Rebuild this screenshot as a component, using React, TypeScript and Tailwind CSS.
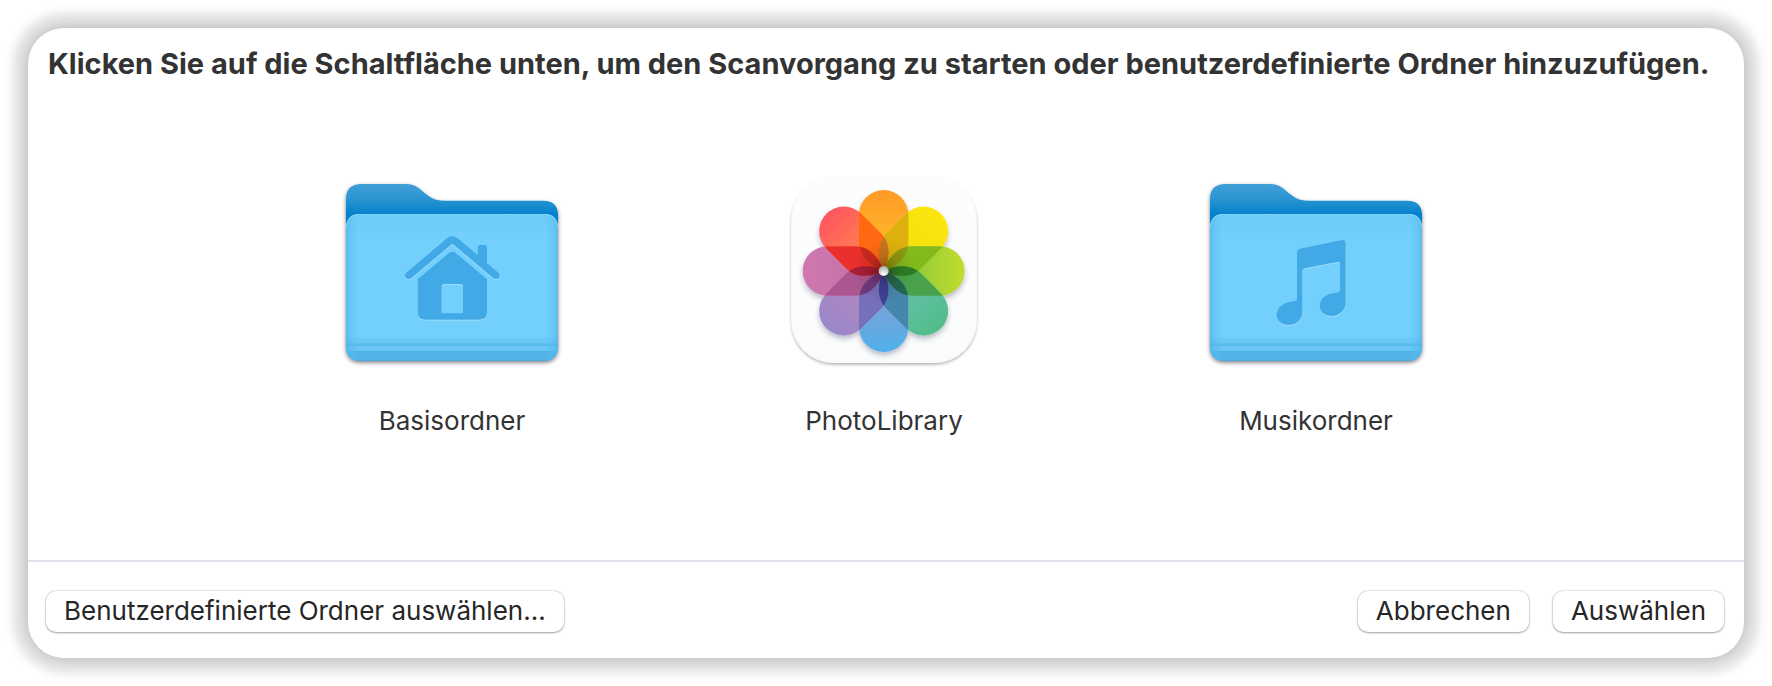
import { ReactNode } from 'react';

interface Petal {
  outer: string;
  inner: string;
  overlap: string; // where it meets the next petal, clockwise
  core: string; // where both neighbours meet on top of it
}

const PETALS: Petal[] = [
  { outer: '#ff9a25', inner: '#ffb42d', overlap: '#dcb10f', core: '#c8761c' },
  { outer: '#fde60a', inner: '#f2e012', overlap: '#84b91b', core: '#8c9a10' },
  { outer: '#c3dc2d', inner: '#92cc3a', overlap: '#4aa34c', core: '#2b7f24' },
  { outer: '#52bd88', inner: '#62bfa8', overlap: '#4686ac', core: '#23684e' },
  { outer: '#4fb0ea', inner: '#7ba2da', overlap: '#7570b9', core: '#3c4294' },
  { outer: '#9a86ca', inner: '#b088c0', overlap: '#ab5690', core: '#6d3a7c' },
  { outer: '#d077b2', inner: '#c574a6', overlap: '#ea302c', core: '#a51f35' },
  { outer: '#ff5560', inner: '#ff7d50', overlap: '#ff6912', core: '#cb2a1e' },
];

const PETAL_PATH = 'M0 0C-38 -12 -74 -42 -74 -85V-169A74 74 0 0 1 74 -169V-85C74 -42 38 -12 0 0Z';

function petalTransform(i: number) {
  return `rotate(${i * 45})`;
}

function PhotosIcon() {
  return (
    <svg viewBox="-48 0 750 645" className="w-[250px] h-[215px]" aria-hidden="true">
      <defs>
        <linearGradient id="tile" x1="0" y1="0" x2="0" y2="1">
          <stop offset="0" stopColor="#fdfdfd" />
          <stop offset="1" stopColor="#fafcfc" />
        </linearGradient>
        <filter id="tileShadow" x="-10%" y="-10%" width="120%" height="120%">
          <feDropShadow dx="0" dy="5" stdDeviation="5" floodColor="#000" floodOpacity="0.3" />
        </filter>
        <filter id="petalShadow" x="-20%" y="-20%" width="140%" height="140%">
          <feDropShadow dx="0" dy="10" stdDeviation="8" floodColor="#335" floodOpacity="0.3" />
        </filter>
        <radialGradient id="hub" cx="0.5" cy="0.8" r="0.8">
          <stop offset="0" stopColor="#fff" />
          <stop offset="1" stopColor="#a8a8a4" />
        </radialGradient>
        <radialGradient id="depth">
          <stop offset="0" stopColor="#200" stopOpacity="0.35" />
          <stop offset="0.5" stopColor="#200" stopOpacity="0.08" />
          <stop offset="1" stopColor="#200" stopOpacity="0" />
        </radialGradient>
        {PETALS.map((p, i) => (
          <linearGradient key={i} id={`petal${i}`} x1="0" y1="0" x2="0" y2="1">
            <stop offset="0" stopColor={p.outer} />
            <stop offset="0.6" stopColor={p.inner} />
          </linearGradient>
        ))}
        {PETALS.map((_, i) => (
          <clipPath key={i} id={`clip${i}`}>
            <path d={PETAL_PATH} transform={petalTransform(i)} />
          </clipPath>
        ))}
      </defs>
      <rect x="49" y="38" width="556" height="556" rx="128" fill="url(#tile)" filter="url(#tileShadow)" />
      <g transform="translate(326 318)">
        <g filter="url(#petalShadow)">
          {PETALS.map((_, i) => (
            <path key={i} d={PETAL_PATH} fill={`url(#petal${i})`} transform={petalTransform(i)} />
          ))}
        </g>
        {PETALS.map((p, i) => (
          <g key={i} clipPath={`url(#clip${(i + 1) % 8})`}>
            <path d={PETAL_PATH} fill={p.overlap} transform={petalTransform(i)} />
          </g>
        ))}
        {PETALS.map((p, i) => (
          <g key={i} clipPath={`url(#clip${(i + 1) % 8})`}>
            <path d={PETAL_PATH} fill={p.core} transform={petalTransform(i + 7)} />
          </g>
        ))}
        <circle r="95" fill="url(#depth)" />
        <circle r="15" fill="url(#hub)" />
      </g>
    </svg>
  );
}

function FolderIcon({ id, children }: { id: string; children: ReactNode }) {
  return (
    <svg viewBox="-9 0 750 645" className="w-[250px] h-[215px]" aria-hidden="true">
      <defs>
        <linearGradient id={`${id}-back`} x1="0" y1="57" x2="0" y2="148" gradientUnits="userSpaceOnUse">
          <stop offset="0" stopColor="#429fd6" />
          <stop offset="0.5" stopColor="#2a95d2" />
          <stop offset="1" stopColor="#0280cb" />
        </linearGradient>
        <linearGradient id={`${id}-side`} x1="0" y1="0" x2="1" y2="0">
          <stop offset="0" stopColor="#4db4ea" stopOpacity="0.7" />
          <stop offset="0.06" stopColor="#62c2f3" stopOpacity="0" />
          <stop offset="0.94" stopColor="#62c2f3" stopOpacity="0" />
          <stop offset="1" stopColor="#4db4ea" stopOpacity="0.7" />
        </linearGradient>
        <linearGradient id={`${id}-front`} x1="0" y1="146" x2="0" y2="587" gradientUnits="userSpaceOnUse">
          <stop offset="0" stopColor="#6ccbf9" />
          <stop offset="0.15" stopColor="#73cffc" />
          <stop offset="1" stopColor="#73cffc" />
        </linearGradient>
        <clipPath id={`${id}-clip`}>
          <path d="M48 190Q48 146 92 146H640Q684 146 684 190V543Q684 587 640 587H92Q48 587 48 543Z" />
        </clipPath>
        <filter id={`${id}-shadow`} x="-10%" y="-10%" width="120%" height="125%">
          <feDropShadow dx="0" dy="6" stdDeviation="6" floodColor="#000" floodOpacity="0.5" />
        </filter>
        <filter id={`${id}-glyph`} x="-10%" y="-10%" width="120%" height="120%">
          <feDropShadow dx="0" dy="3" stdDeviation="2" floodColor="#a5e2ff" floodOpacity="0.7" />
        </filter>
      </defs>
      <path
        d="M48 103Q48 57 94 57H228C252 57 262 66 276 77C298 95 310 107 345 107H640Q684 107 684 151V543Q684 587 640 587H92Q48 587 48 543Z"
        fill={`url(#${id}-back)`}
        filter={`url(#${id}-shadow)`}
      />
      <g clipPath={`url(#${id}-clip)`}>
        <rect x="48" y="146" width="636" height="441" fill={`url(#${id}-front)`} />
        <rect x="48" y="520" width="636" height="15" fill="#6ac7f6" />
        <rect x="48" y="535" width="636" height="8" fill="#58bbee" />
        <rect x="48" y="543" width="636" height="14" fill="#69c6f5" />
        <rect x="48" y="557" width="636" height="30" fill="#50b4e7" />
        <rect x="48" y="146" width="636" height="441" fill={`url(#${id}-side)`} />
        <path d="M48 190Q48 147 92 147H640Q684 147 684 190" fill="none" stroke="#86d4fa" strokeWidth="4" />
      </g>
      <g fill="#40a9e6" filter={`url(#${id}-glyph)`}>
        {children}
      </g>
    </svg>
  );
}

function HouseGlyph() {
  return (
    <>
      <path d="M353 218Q367 208 381 218L443 270V247Q443 240 450 240H464Q471 240 471 247V294L506 324Q513 333 506 340Q499 345 490 340L367 236L244 340Q235 345 228 340Q221 332 229 323Z" />
      <path
        fillRule="evenodd"
        d="M357 264Q367 256 377 264L471 343V442Q471 464 449 464H285Q263 464 263 442V343ZM343 357Q335 357 335 365V445H399V365Q399 357 391 357Z"
      />
    </>
  );
}

function NoteGlyph() {
  return (
    <path d="M309 262Q309 253 318 251L444 225Q455 224 455 235V412C455 437 435 453 412 453C391 453 377 440 377 423C377 401 395 388 421 384Q438 383 438 376V296Q438 289 431 291L332 310Q325 312 325 319V440C325 464 306 480 283 480C261 480 248 466 248 450C248 427 267 414 291 410Q309 408 309 402Z" />
  );
}

const FOLDERS = [
  { label: 'Basisordner', icon: <FolderIcon id="home"><HouseGlyph /></FolderIcon> },
  { label: 'PhotoLibrary', icon: <PhotosIcon /> },
  { label: 'Musikordner', icon: <FolderIcon id="music"><NoteGlyph /></FolderIcon> },
];

function PushButton({ children }: { children: ReactNode }) {
  return (
    <button
      type="button"
      className="px-[18px] pt-1 pb-[5px] rounded-[10px] bg-white text-[26px] leading-8 text-[#262626] whitespace-nowrap shadow-[0_0_2px_rgba(0,0,0,0.3),0_1px_2px_rgba(0,0,0,0.3)]"
    >
      {children}
    </button>
  );
}

export default function App() {
  return (
    <div className="min-h-screen flex bg-white p-7 font-['Inter','Liberation_Sans',sans-serif] [font-variant-ligatures:none]">
      <main className="flex-1 flex flex-col rounded-[36px] bg-white shadow-[0_0_10px_16px_rgba(0,0,0,0.09),0_0_18px_rgba(0,0,0,0.24)]">
        <h1 className="mt-4 px-5 text-[29px] leading-10 font-bold text-[#333] whitespace-nowrap">
          Klicken Sie auf die Schaltfläche unten, um den Scanvorgang zu starten oder benutzerdefinierte Ordner hinzuzufügen.
        </h1>

        <div className="flex-1 flex justify-center items-start gap-[182px] pt-[81px] pr-1">
          {FOLDERS.map(folder => (
            <figure key={folder.label} className="flex flex-col items-center gap-[25px]">
              {folder.icon}
              <figcaption className="text-[26px] leading-8 text-[#333]">{folder.label}</figcaption>
            </figure>
          ))}
        </div>

        <footer className="flex items-center gap-6 border-t-2 border-[#dfe3ed] pl-[18px] pr-5 pt-[29px] pb-[26px]">
          <PushButton>Benutzerdefinierte Ordner auswählen...</PushButton>
          <div className="flex-1" />
          <PushButton>Abbrechen</PushButton>
          <PushButton>Auswählen</PushButton>
        </footer>
      </main>
    </div>
  );
}
